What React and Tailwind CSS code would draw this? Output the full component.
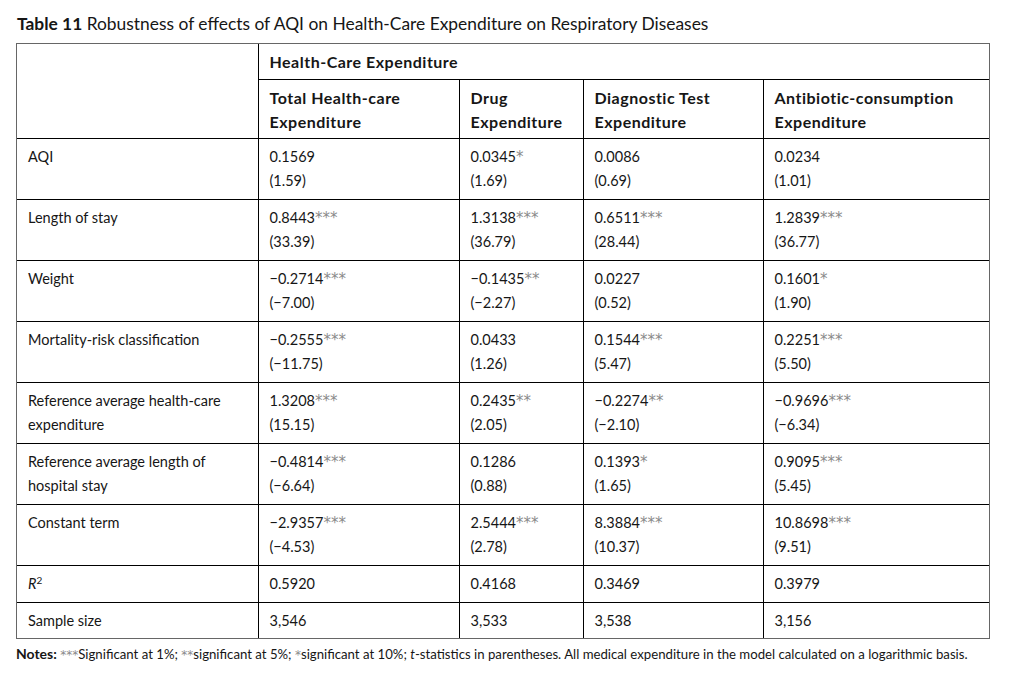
import React from "react";

const M = "\u2212";

const rows = [
  { label: ["AQI"], cells: [["0.1569", "", "(1.59)"], ["0.0345", "*", "(1.69)"], ["0.0086", "", "(0.69)"], ["0.0234", "", "(1.01)"]] },
  { label: ["Length of stay"], cells: [["0.8443", "***", "(33.39)"], ["1.3138", "***", "(36.79)"], ["0.6511", "***", "(28.44)"], ["1.2839", "***", "(36.77)"]] },
  { label: ["Weight"], cells: [[M + "0.2714", "***", "(" + M + "7.00)"], [M + "0.1435", "**", "(" + M + "2.27)"], ["0.0227", "", "(0.52)"], ["0.1601", "*", "(1.90)"]] },
  { label: ["Mortality-risk classification"], cells: [[M + "0.2555", "***", "(" + M + "11.75)"], ["0.0433", "", "(1.26)"], ["0.1544", "***", "(5.47)"], ["0.2251", "***", "(5.50)"]] },
  { label: ["Reference average health-care", "expenditure"], cells: [["1.3208", "***", "(15.15)"], ["0.2435", "**", "(2.05)"], [M + "0.2274", "**", "(" + M + "2.10)"], [M + "0.9696", "***", "(" + M + "6.34)"]] },
  { label: ["Reference average length of", "hospital stay"], cells: [[M + "0.4814", "***", "(" + M + "6.64)"], ["0.1286", "", "(0.88)"], ["0.1393", "*", "(1.65)"], ["0.9095", "***", "(5.45)"]] },
  { label: ["Constant term"], cells: [[M + "2.9357", "***", "(" + M + "4.53)"], ["2.5444", "***", "(2.78)"], ["8.3884", "***", "(10.37)"], ["10.8698", "***", "(9.51)"]] },
];

const cell = "align-top px-[11px] pt-[6px] leading-[24px]";
const head = " text-[16px] tracking-[0.5px] font-bold";

function Stars({ s, size = "text-[15px]" }) {
  return (
    <span
      className={"text-[#8a8a8a] leading-none " + size}
      style={{ fontFamily: "'DejaVu Sans', sans-serif" }}
    >
      {s}
    </span>
  );
}

export default function App() {
  return (
    <div
      className="w-[1021px] h-[688px] bg-white pl-4 pt-[12px] text-[#161616]"
      style={{ fontFamily: "Lato, 'Open Sans', sans-serif" }}
    >
      <div className="text-[17.4px] leading-[24px] pl-[1px]">
        <span className="font-bold">Table 11</span> Robustness of effects of AQI on Health-Care Expenditure on Respiratory Diseases
      </div>
      <div className="mt-[7px] w-[974px] border border-[#666] text-[14.5px]">
        <table className="w-full table-fixed border-collapse">
          <colgroup>
            <col className="w-[241px]" />
            <col className="w-[201px]" />
            <col className="w-[124px]" />
            <col className="w-[180px]" />
            <col />
          </colgroup>
          <tbody>
            <tr className="h-[35px]">
              <td rowSpan={2} className={cell}></td>
              <td colSpan={4} className={cell + " border-l border-black" + head}>Health-Care Expenditure</td>
            </tr>
            <tr className="h-[59px]">
              <td className={cell + " border-l border-t border-black" + head}>Total Health-care<br />Expenditure</td>
              <td className={cell + " border-l border-t border-black" + head}>Drug<br />Expenditure</td>
              <td className={cell + " border-l border-t border-black" + head}>Diagnostic Test<br />Expenditure</td>
              <td className={cell + " border-l border-t border-black" + head}>Antibiotic-consumption<br />Expenditure</td>
            </tr>
            {rows.map((r, i) => (
              <tr key={i} className="h-[61px]">
                <td className={cell + " border-t border-black"}>
                  {r.label.map((l, j) => (
                    <div key={j}>{l}</div>
                  ))}
                </td>
                {r.cells.map((c, j) => (
                  <td key={j} className={cell + " border-l border-t border-black"}>
                    <div>
                      {c[0]}
                      {c[1] && <Stars s={c[1]} />}
                    </div>
                    <div>{c[2]}</div>
                  </td>
                ))}
              </tr>
            ))}
            <tr className="h-[37px]">
              <td className={cell + " border-t border-black"}>
                <span className="italic">R</span>
                <sup className="text-[10px]">2</sup>
              </td>
              <td className={cell + " border-l border-t border-black"}>0.5920</td>
              <td className={cell + " border-l border-t border-black"}>0.4168</td>
              <td className={cell + " border-l border-t border-black"}>0.3469</td>
              <td className={cell + " border-l border-t border-black"}>0.3979</td>
            </tr>
            <tr className="h-[36px]">
              <td className={cell + " border-t border-black"}>Sample size</td>
              <td className={cell + " border-l border-t border-black"}>3,546</td>
              <td className={cell + " border-l border-t border-black"}>3,533</td>
              <td className={cell + " border-l border-t border-black"}>3,538</td>
              <td className={cell + " border-l border-t border-black"}>3,156</td>
            </tr>
          </tbody>
        </table>
      </div>
      <div className="mt-[6px] text-[13.2px] leading-[18px]">
        <span className="font-bold text-[14px]">Notes:</span>{" "}
        <Stars s="***" size="text-[12px]" />Significant at 1%; <Stars s="**" size="text-[12px]" />significant at 5%; <Stars s="*" size="text-[12px]" />significant at 10%; <span className="italic">t</span>-statistics in parentheses. All medical expenditure in the model calculated on a logarithmic basis.
      </div>
    </div>
  );
}
